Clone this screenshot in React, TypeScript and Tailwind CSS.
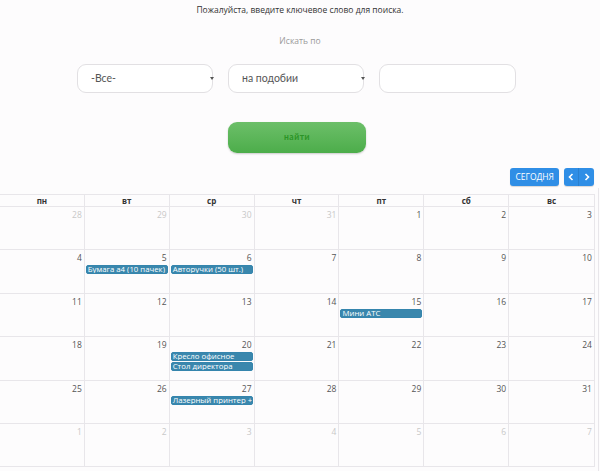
import React from "react";

type Cell = { day: number; muted?: boolean; events?: string[] };

const weekDays = ["пн", "вт", "ср", "чт", "пт", "сб", "вс"];

const weeks: Cell[][] = [
  [
    { day: 28, muted: true },
    { day: 29, muted: true },
    { day: 30, muted: true },
    { day: 31, muted: true },
    { day: 1 },
    { day: 2 },
    { day: 3 },
  ],
  [
    { day: 4 },
    { day: 5, events: ["Бумага а4 (10 пачек)"] },
    { day: 6, events: ["Авторучки (50 шт.)"] },
    { day: 7 },
    { day: 8 },
    { day: 9 },
    { day: 10 },
  ],
  [
    { day: 11 },
    { day: 12 },
    { day: 13 },
    { day: 14 },
    { day: 15, events: ["Мини АТС"] },
    { day: 16 },
    { day: 17 },
  ],
  [
    { day: 18 },
    { day: 19 },
    { day: 20, events: ["Кресло офисное", "Стол директора"] },
    { day: 21 },
    { day: 22 },
    { day: 23 },
    { day: 24 },
  ],
  [
    { day: 25 },
    { day: 26 },
    { day: 27, events: ["Лазерный принтер + расх"] },
    { day: 28 },
    { day: 29 },
    { day: 30 },
    { day: 31 },
  ],
  [
    { day: 1, muted: true },
    { day: 2, muted: true },
    { day: 3, muted: true },
    { day: 4, muted: true },
    { day: 5, muted: true },
    { day: 6, muted: true },
    { day: 7, muted: true },
  ],
];

function SelectBox({ label }: { label: string }) {
  return (
    <div className="relative w-[136px] h-[29px] rounded-[9px] border border-[#e2e0e3] bg-white flex items-center pl-[13px] text-[10.5px] text-[#555]">
      {label}
      <span className="absolute right-[-2px] top-[12px] w-0 h-0 border-l-[2px] border-r-[2px] border-t-[3px] border-l-transparent border-r-transparent border-t-[#555]" />
    </div>
  );
}

export default function App() {
  return (
    <div
      className="w-[600px] h-[471px] bg-[#fdfcfd] overflow-hidden relative"
      style={{ fontFamily: '"Open Sans", "Liberation Sans", sans-serif' }}
    >
      <div className="absolute right-[1px] top-[188px] bottom-0 w-px bg-[#e8e6ea]" />

      <div className="pt-[3px] text-center text-[8.5px] text-[#333] leading-[14px]">
        Пожалуйста, введите ключевое слово для поиска.
      </div>

      <div className="mt-[17px] text-center text-[8.5px] text-[#9a9a9a] leading-[14px]">
        Искать по
      </div>

      <div
        className="mt-[16px] flex gap-[15px] pl-[77px]"
        style={{ fontFamily: 'Lato, "Noto Sans", sans-serif' }}
      >
        <SelectBox label="-Все-" />
        <SelectBox label="на подобии" />
        <div className="w-[137px] h-[29px] rounded-[9px] border border-[#e2e0e3] bg-white" />
      </div>

      <div className="mt-[29px] flex pl-[228px]">
        <button
          className="w-[138px] h-[31px] rounded-[9px] bg-gradient-to-b from-[#6cbf69] to-[#4cad4a] shadow-[0_1px_2px_rgba(0,0,0,0.2)] text-[8.5px] font-bold text-[#2a9426] tracking-[0.5px]"
          style={{ fontFamily: 'Lato, "Noto Sans", sans-serif' }}
        >
          найти
        </button>
      </div>

      <div className="mt-[15px] flex justify-end gap-[5px] pr-[6px]">
        <button className="h-[18px] px-[5px] rounded-[3px] bg-[#2f8ee6] text-white text-[8.5px] leading-[18px] shadow-[0_1px_1px_rgba(0,0,0,0.15)]">
          СЕГОДНЯ
        </button>
        <div className="flex h-[18px] rounded-[3px] bg-[#2f8ee6] shadow-[0_1px_1px_rgba(0,0,0,0.15)]">
          <span className="w-[15px] flex items-center justify-center border-r border-[#2a80cf]">
            <svg width="6" height="8" viewBox="0 0 6 8">
              <path d="M4.5 1 L1.5 4 L4.5 7" stroke="white" strokeWidth="1.6" fill="none" />
            </svg>
          </span>
          <span className="w-[15px] flex items-center justify-center">
            <svg width="6" height="8" viewBox="0 0 6 8">
              <path d="M1.5 1 L4.5 4 L1.5 7" stroke="white" strokeWidth="1.6" fill="none" />
            </svg>
          </span>
        </div>
      </div>

      <div className="mt-[8px] -ml-px w-[596px] border-l border-r border-t border-[#e8e6ea]">
        <div className="grid grid-cols-7 h-[12px] border-b border-[#e8e6ea]">
          {weekDays.map((d, i) => (
            <div
              key={d}
              className={`text-center text-[8px] font-bold text-[#333] leading-[11px] ${i < 6 ? "border-r border-[#e8e6ea]" : ""}`}
            >
              {d}
            </div>
          ))}
        </div>
        {weeks.map((week, wi) => (
          <div key={wi} className="grid grid-cols-7 h-[43.4px] border-b border-[#e8e6ea]">
            {week.map((c, ci) => (
              <div
                key={ci}
                className={`min-w-0 flex flex-col ${ci < 6 ? "border-r border-[#e8e6ea]" : ""}`}
              >
                <div
                  className={`text-right pr-[2px] pt-[2px] text-[8.5px] leading-[12px] ${c.muted ? "text-[#c8c8c8]" : "text-[#555]"}`}
                >
                  {c.day}
                </div>
                {c.events?.map((e) => (
                  <div
                    key={e}
                    className="ml-[1px] mr-[1px] mt-[1px] h-[9px] rounded-[2px] bg-[#3a87ad] border border-[#3585ad] text-white text-[7.8px] leading-[7px] pl-[1px] whitespace-nowrap overflow-hidden"
                  >
                    {e}
                  </div>
                ))}
              </div>
            ))}
          </div>
        ))}
      </div>
    </div>
  );
}
